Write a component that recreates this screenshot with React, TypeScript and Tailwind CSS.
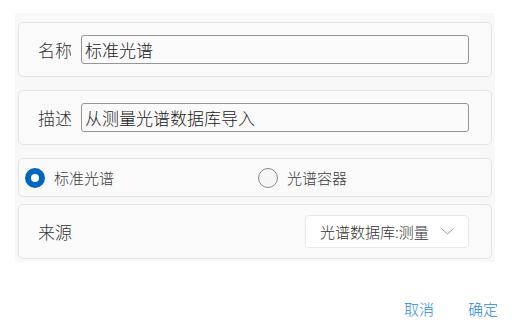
import React from "react";

const font = { fontFamily: '"Noto Sans CJK SC", "Noto Sans", sans-serif' };

function TextRow({ label, value }: { label: string; value: string }) {
  return (
    <div className="flex h-[55px] items-center rounded-[5px] border border-[#e3e3e3] bg-[#fafafa] pl-[19px]">
      <span className="w-[34px] text-[17px] leading-none text-[#333]">{label}</span>
      <div className="ml-[9px] flex h-[29px] w-[388px] items-center rounded-[3px] border border-[#969696] pl-[3px] text-[17px] leading-none text-[#1a1a1a]">
        {value}
      </div>
    </div>
  );
}

function Radio({ checked, label }: { checked?: boolean; label: string }) {
  return (
    <div className="flex items-center gap-[9px]">
      {checked ? (
        <span className="block h-[20px] w-[20px] rounded-full border-[6px] border-[#0067c0] bg-white" />
      ) : (
        <span className="block h-[20px] w-[20px] rounded-full border border-[#8a8a8a] bg-[#f6f6f6]" />
      )}
      <span className="text-[15px] leading-none text-[#3c3c3c]">{label}</span>
    </div>
  );
}

export default function App() {
  return (
    <div className="h-[323px] w-[512px] overflow-hidden bg-white font-light" style={font}>
      <div className="ml-[15px] mt-[13px] w-[480px] bg-[#f8f8f8] px-[3px] pb-[3px] pt-[9px]">
        <TextRow label="名称" value="标准光谱" />
        <div className="mt-[13px]">
          <TextRow label="描述" value="从测量光谱数据库导入" />
        </div>

        <div className="mt-[13px] flex h-[39px] items-center rounded-[5px] border border-[#e3e3e3] bg-[#fafafa] pl-[6px]">
          <div className="w-[233px]">
            <Radio checked label="标准光谱" />
          </div>
          <Radio label="光谱容器" />
        </div>

        <div className="mt-[7px] flex h-[55px] items-center justify-between rounded-[5px] border border-[#e3e3e3] bg-[#fafafa] pl-[19px] pr-[22px]">
          <span className="text-[17px] leading-none text-[#333]">来源</span>
          <div className="flex h-[33px] w-[164px] items-center justify-between rounded-[4px] border border-[#e8e8e8] bg-white pl-[14px] pr-[14px]">
            <span className="text-[15px] leading-none text-[#333]">光谱数据库:测量</span>
            <svg width="13" height="7" viewBox="0 0 13 7" fill="none">
              <path d="M0.5 0.5 L6.5 6 L12.5 0.5" stroke="#9a9a9a" strokeWidth="1" />
            </svg>
          </div>
        </div>
      </div>

      <div className="mt-[37px] flex justify-end gap-[34px] pr-[14px] text-[15px] leading-[20px] text-[#1f8ae0]">
        <button type="button">取消</button>
        <button type="button">确定</button>
      </div>
    </div>
  );
}
